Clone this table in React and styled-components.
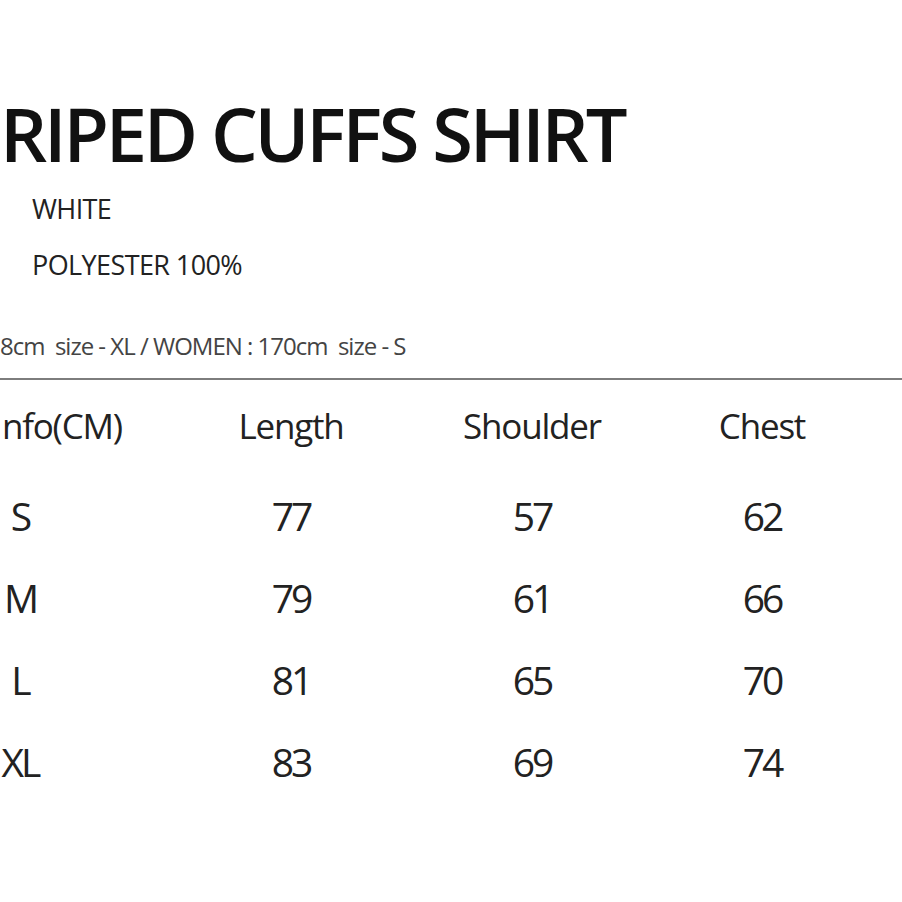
import React from 'react'
import styled, { createGlobalStyle } from 'styled-components'

const GlobalStyle = createGlobalStyle`
  html, body {
    margin: 0;
    padding: 0;
    background: #fff;
  }
  body {
    font-family: 'Open Sans', 'Noto Sans', sans-serif;
    color: #222;
    overflow: hidden;
  }
`

const Page = styled.div`
  width: 902px;
  height: 902px;
  overflow: hidden;
  padding-top: 97px;
  box-sizing: border-box;
`

const Title = styled.h1`
  margin: 0;
  font-size: 74px;
  line-height: 74px;
  font-weight: 600;
  color: #111;
  white-space: nowrap;
  letter-spacing: -3.2px;
`

const Specs = styled.div`
  margin-top: 10px;
  padding-left: 32px;
`

const SpecLine = styled.div`
  font-size: 27px;
  line-height: 56px;
  color: #222;
  white-space: nowrap;
  letter-spacing: -0.6px;
`

const ModelLine = styled.div`
  margin-top: 40px;
  font-size: 24px;
  line-height: 25px;
  color: #444;
  white-space: nowrap;
  letter-spacing: -1px;
`

const Rule = styled.hr`
  margin: 20px 0 0;
  border: 0;
  height: 2px;
  background: #7d7d7d;
`

const Table = styled.div`
  margin-top: 28px;
  margin-left: -120px;
  display: grid;
  grid-template-columns: 280px 262px 220px 240px;
`

const HeadCell = styled.div`
  font-size: 35px;
  line-height: 35px;
  color: #222;
  text-align: ${p => (p.$first ? 'right' : 'center')};
  padding-right: ${p => (p.$first ? '38px' : '0')};
  white-space: nowrap;
  letter-spacing: -1.2px;
  margin-bottom: 32px;
`

const Cell = styled.div`
  font-size: 39px;
  line-height: 82px;
  height: 82px;
  color: #222;
  text-align: center;
  letter-spacing: -3px;
`

const heads = ['nfo(CM)', 'Length', 'Shoulder', 'Chest']

const rows = [
  ['S', 77, 57, 62],
  ['M', 79, 61, 66],
  ['L', 81, 65, 70],
  ['XL', 83, 69, 74]
]

export default function App() {
  return (
    <Page>
      <GlobalStyle />
      <Title>RIPED CUFFS SHIRT</Title>
      <Specs>
        <SpecLine>WHITE</SpecLine>
        <SpecLine>POLYESTER 100%</SpecLine>
      </Specs>
      <ModelLine>8cm&nbsp; size - XL / WOMEN : 170cm&nbsp; size - S</ModelLine>
      <Rule />
      <Table>
        {heads.map((h, i) => (
          <HeadCell key={h} $first={i === 0}>{h}</HeadCell>
        ))}
        {rows.map(r =>
          r.map((v, i) => <Cell key={`${r[0]}-${i}`}>{v}</Cell>)
        )}
      </Table>
    </Page>
  )
}
